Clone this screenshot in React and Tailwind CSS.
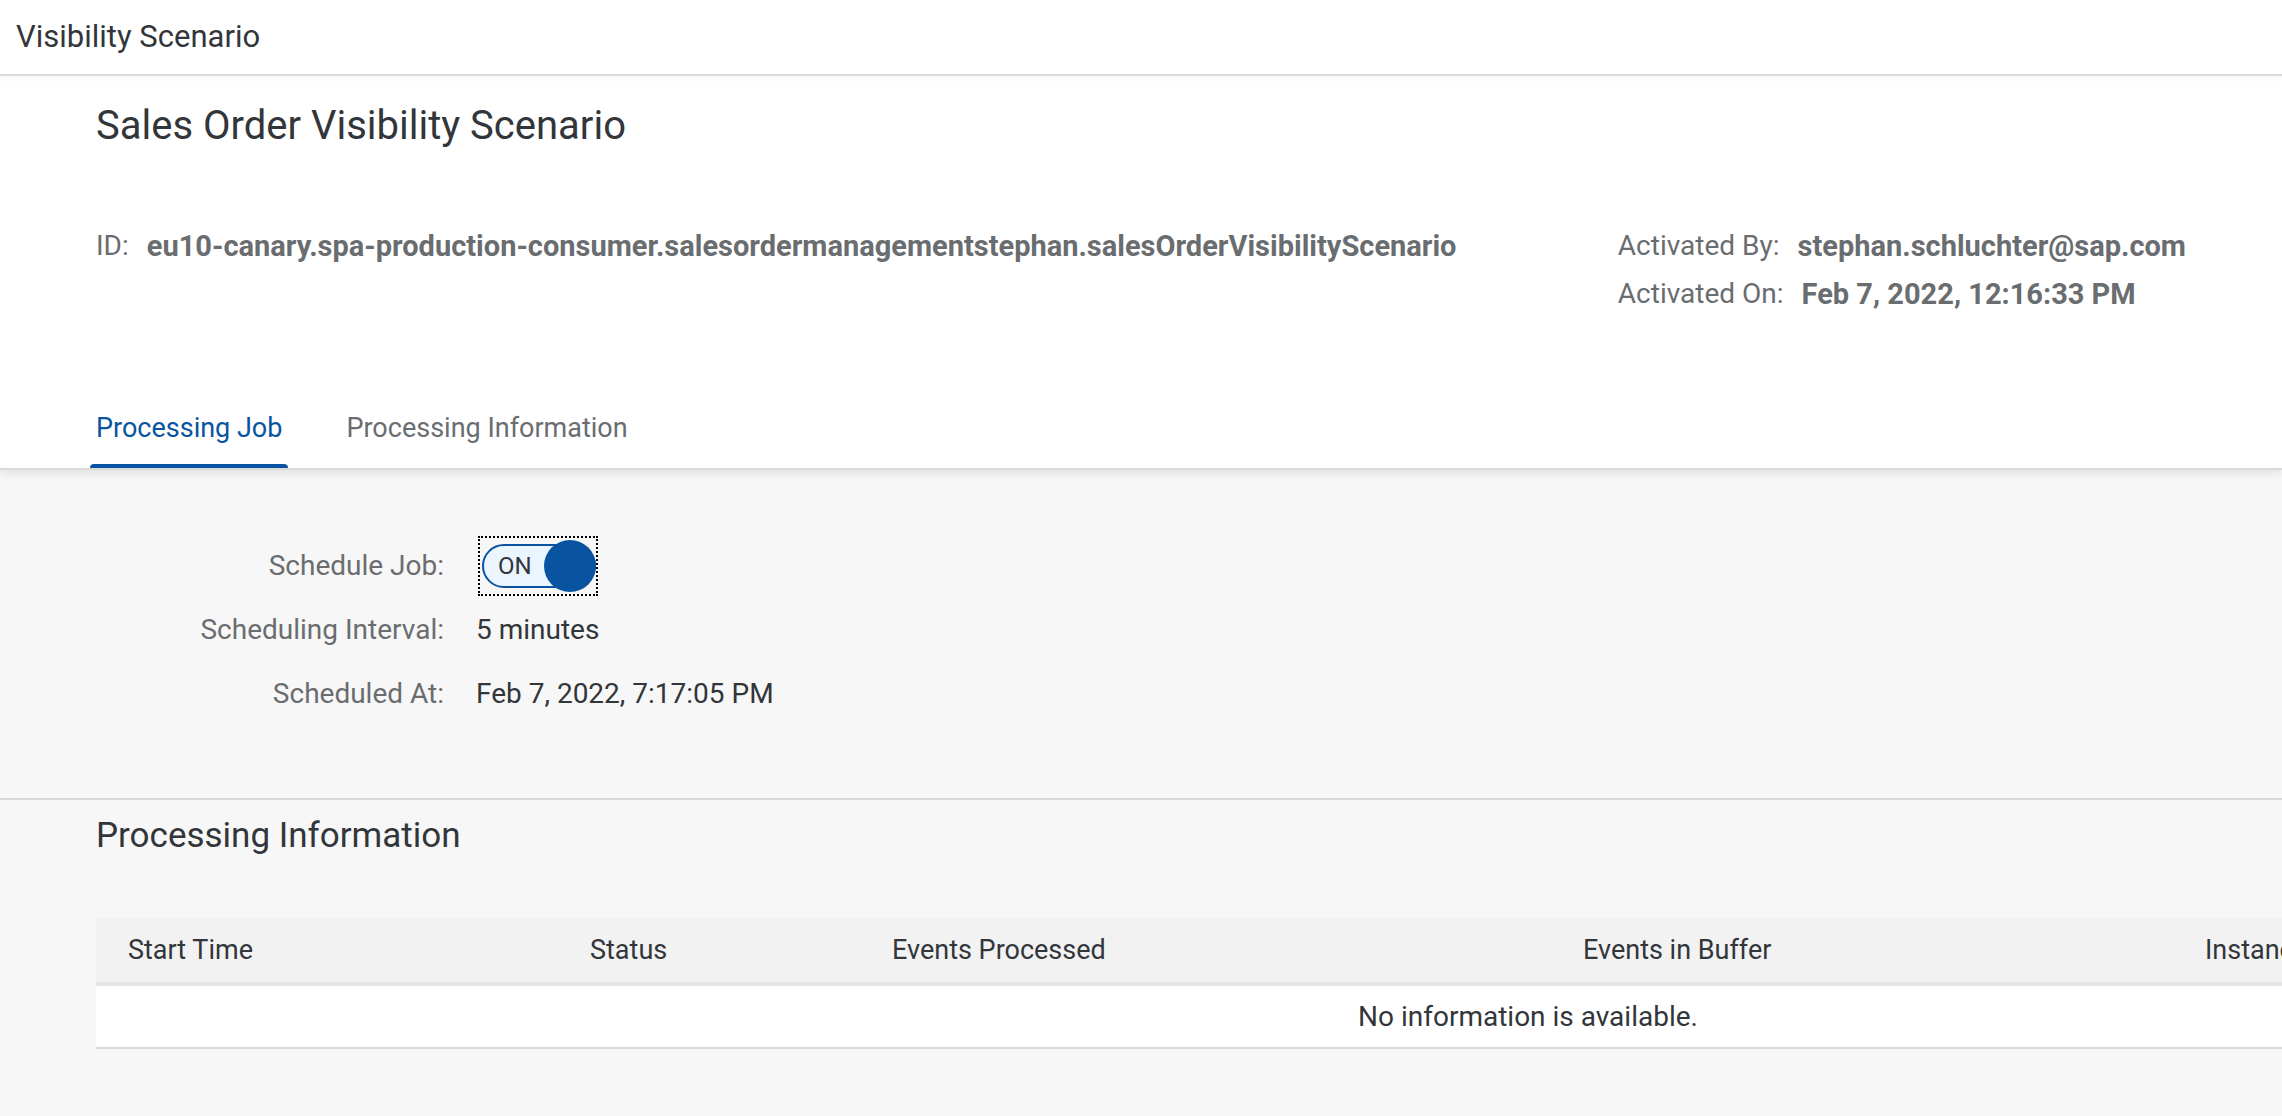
import { useState } from 'react';

const columns = [
  { name: 'Start Time', width: 'w-[462px]' },
  { name: 'Status', width: 'w-[302px]' },
  { name: 'Events Processed', width: 'w-[691px]' },
  { name: 'Events in Buffer', width: 'w-[622px]' },
  { name: 'Instances', width: 'w-[787px]' },
];

function Attribute({ label, value }) {
  return (
    <div className="flex gap-[18px] leading-12 whitespace-nowrap">
      <dt>{label}</dt>
      <dd className="text-[29px] font-bold">{value}</dd>
    </div>
  );
}

function Tab({ active, onClick, children }) {
  return (
    <button
      type="button"
      role="tab"
      aria-selected={active}
      onClick={onClick}
      className={
        active
          ? 'relative h-20 text-[27px] text-[#0854a0]'
          : 'relative h-20 text-[27px] text-[#6a6d70]'
      }
    >
      {children}
      {active && <span className="absolute -inset-x-1.5 bottom-0 h-1 rounded-t bg-[#0854a0]" />}
    </button>
  );
}

function Switch({ id, checked, onChange }) {
  return (
    <span className="relative block h-15 w-30 border-2 border-dotted border-black pt-1.5 pl-0.5">
      <span
        className={
          checked
            ? 'flex h-11 items-center rounded-full border-2 border-[#0854a0] bg-[#ebf5fe] pl-3.5 text-2xl'
            : 'flex h-11 items-center justify-end rounded-full border-2 border-[#89919a] bg-[#ededed] pr-2 text-2xl'
        }
      >
        {checked ? 'ON' : 'OFF'}
      </span>
      <span
        className={
          checked
            ? 'absolute top-0.5 right-0 size-13 rounded-full bg-[#0854a0]'
            : 'absolute top-0.5 left-0 size-13 rounded-full border-2 border-[#89919a] bg-white'
        }
      />
      <input
        id={id}
        type="checkbox"
        role="switch"
        checked={checked}
        onChange={(e) => onChange(e.target.checked)}
        className="absolute inset-0 size-full cursor-pointer opacity-0"
      />
    </span>
  );
}

export default function App() {
  const [tab, setTab] = useState('job');
  const [scheduled, setScheduled] = useState(true);

  return (
    <div className="min-h-screen overflow-x-hidden bg-[#f7f7f7] font-['Roboto','Noto_Sans',sans-serif] text-[28px] text-[#32363a]">
      <header className="relative flex h-19 items-center border-b-2 border-[#d9d9d9] bg-white px-4 shadow-[0_2px_6px_rgba(0,0,0,0.05)]">
        <h1 className="text-[31px]">Visibility Scenario</h1>
      </header>

      <section className="border-b-2 border-[#d9d9d9] bg-white px-24 pt-[26px] shadow-[0_4px_8px_rgba(0,0,0,0.08)]">
        <h2 className="text-[40px] leading-12">Sales Order Visibility Scenario</h2>
        <dl className="mt-18 grid grid-cols-[73fr_27fr] text-[#6a6d70]">
          <div>
            <Attribute
              label="ID:"
              value="eu10-canary.spa-production-consumer.salesordermanagementstephan.salesOrderVisibilityScenario"
            />
          </div>
          <div>
            <Attribute label="Activated By:" value="stephan.schluchter@sap.com" />
            <Attribute label="Activated On:" value="Feb 7, 2022, 12:16:33 PM" />
          </div>
        </dl>
        <div role="tablist" className="mt-[70px] flex gap-16">
          <Tab active={tab === 'job'} onClick={() => setTab('job')}>
            Processing Job
          </Tab>
          <Tab active={tab === 'info'} onClick={() => setTab('info')}>
            Processing Information
          </Tab>
        </div>
      </section>

      <section className="grid auto-rows-[64px] grid-cols-[348px_1fr] items-center gap-x-8 border-b-2 border-[#d9d9d9] px-24 pt-16 pb-18">
        <label htmlFor="schedule-job" className="text-right text-[#6a6d70]">
          Schedule Job:
        </label>
        <div className="pl-0.5">
          <Switch id="schedule-job" checked={scheduled} onChange={setScheduled} />
        </div>
        <span className="text-right text-[#6a6d70]">Scheduling Interval:</span>
        <span>5 minutes</span>
        <span className="text-right text-[#6a6d70]">Scheduled At:</span>
        <span>Feb 7, 2022, 7:17:05 PM</span>
      </section>

      <section className="pt-4 pl-24">
        <h3 className="text-[35px] leading-10">Processing Information</h3>
        <div className="mt-[62px] overflow-x-hidden">
          <table className="w-[2864px] table-fixed border-separate border-spacing-0 text-[27px]">
            <thead>
              <tr className="h-17">
                {columns.map((c) => (
                  <th
                    key={c.name}
                    scope="col"
                    className={`${c.width} border-b-4 border-[#e4e4e4] bg-[#f2f2f2] pl-8 text-left font-normal`}
                  >
                    {c.name}
                  </th>
                ))}
              </tr>
            </thead>
            <tbody>
              <tr className="h-[63px]">
                <td colSpan={5} className="border-b-2 border-[#d9d9d9] bg-white text-center text-[28px]">
                  No information is available.
                </td>
              </tr>
            </tbody>
          </table>
        </div>
      </section>
    </div>
  );
}
